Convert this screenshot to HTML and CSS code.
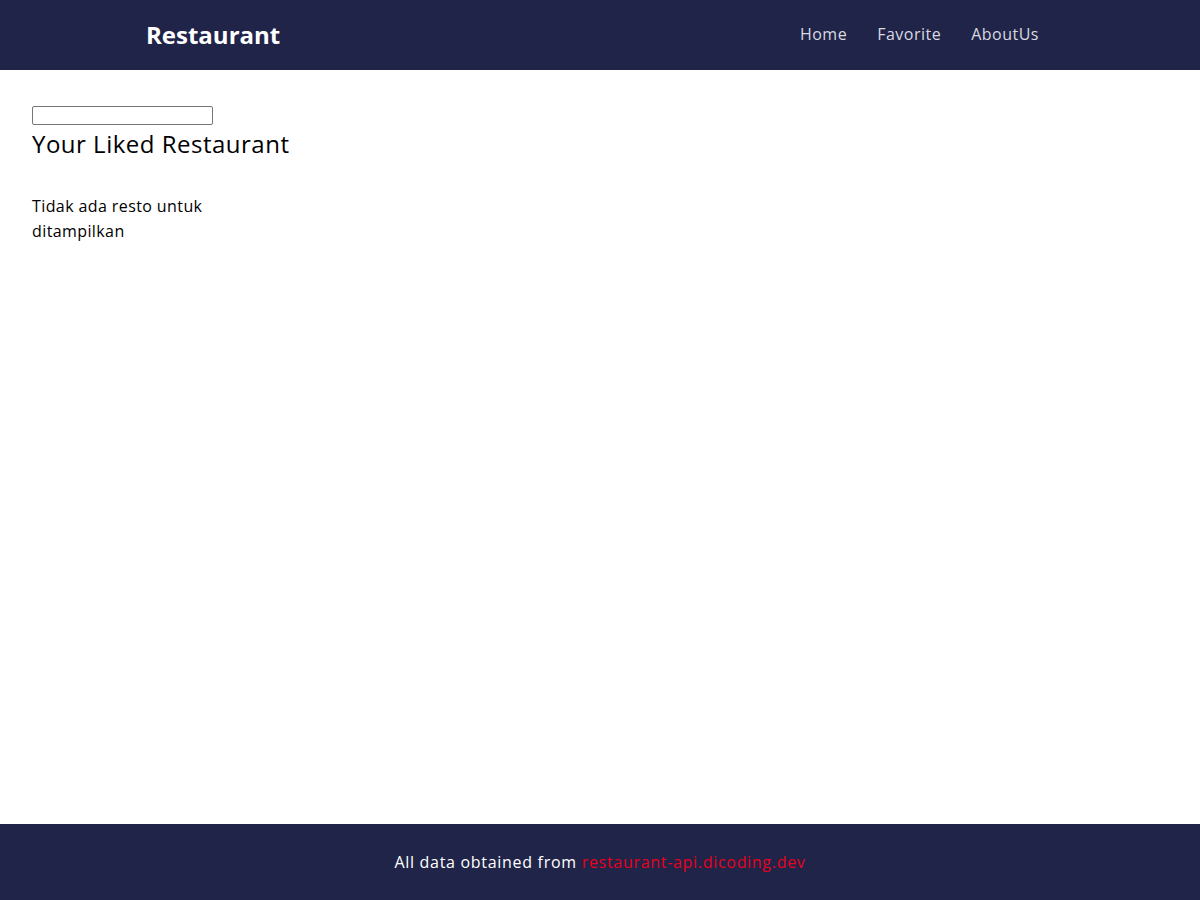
FILE: index.html
```html
<!DOCTYPE html>
<html lang="id">
<head>
<meta charset="utf-8">
<title>Restaurant</title>
<link rel="stylesheet" href="styles.css">
</head>
<body>
<header class="app-bar">
  <div class="app-bar__inner">
    <h1 class="app-bar__brand">Restaurant</h1>
    <nav class="nav">
      <ul class="nav__list">
        <li class="nav__item"><a href="#">Home</a></li>
        <li class="nav__item"><a href="#">Favorite</a></li>
        <li class="nav__item"><a href="#">AboutUs</a></li>
      </ul>
    </nav>
  </div>
</header>
<main class="content">
  <input class="search" type="text" aria-label="search">
  <h2 class="content__heading">Your Liked Restaurant</h2>
  <div class="restos">
    <div class="resto-item__not__found">Tidak ada resto untuk ditampilkan</div>
  </div>
</main>
<footer class="footer">
  <p>All data obtained from <a href="#">restaurant-api.dicoding.dev</a></p>
</footer>
</body>
</html>
```
FILE: styles.css
```css
* { box-sizing: border-box; }
html, body { margin: 0; padding: 0; }
body {
  font-family: "Open Sans", sans-serif;
  color: #000;
  min-height: 900px;
  display: flex;
  flex-direction: column;
}
.app-bar {
  background: #212449;
  height: 70px;
}
.app-bar__inner {
  height: 100%;
  padding: 0 161px 0 146px;
  display: flex;
  align-items: center;
  justify-content: space-between;
}
.app-bar__brand {
  margin: 0 0 2px;
  color: #fff;
  font-size: 24px;
  font-weight: 700;
}
.nav__list {
  list-style: none;
  margin: 0 0 2px;
  padding: 0;
  display: flex;
  gap: 30px;
}
.nav__item a {
  color: #d9d9e0;
  text-decoration: none;
  font-size: 16px;
  letter-spacing: 0.5px;
}
.content {
  flex: 1;
  padding: 36px 32px;
}
.search {
  display: block;
  width: 181px;
  height: 19px;
  margin: 0;
  border: 1px solid #767676;
  border-radius: 2px;
  padding: 0;
}
.content__heading {
  margin: 1px 0 0;
  font-size: 24px;
  font-weight: 400;
  line-height: 36px;
  letter-spacing: 0.5px;
}
.restos {
  display: grid;
  grid-template-columns: 200px;
  margin-top: 32px;
}
.resto-item__not__found {
  font-size: 16px;
  line-height: 25px;
  letter-spacing: 0.4px;
}
.footer {
  background: #212449;
  height: 76px;
  display: flex;
  align-items: center;
  justify-content: center;
  color: #fff;
  font-size: 16px;
  letter-spacing: 0.7px;
}
.footer p { margin: 0; }
.footer a {
  color: #e8001c;
  text-decoration: none;
}
```
